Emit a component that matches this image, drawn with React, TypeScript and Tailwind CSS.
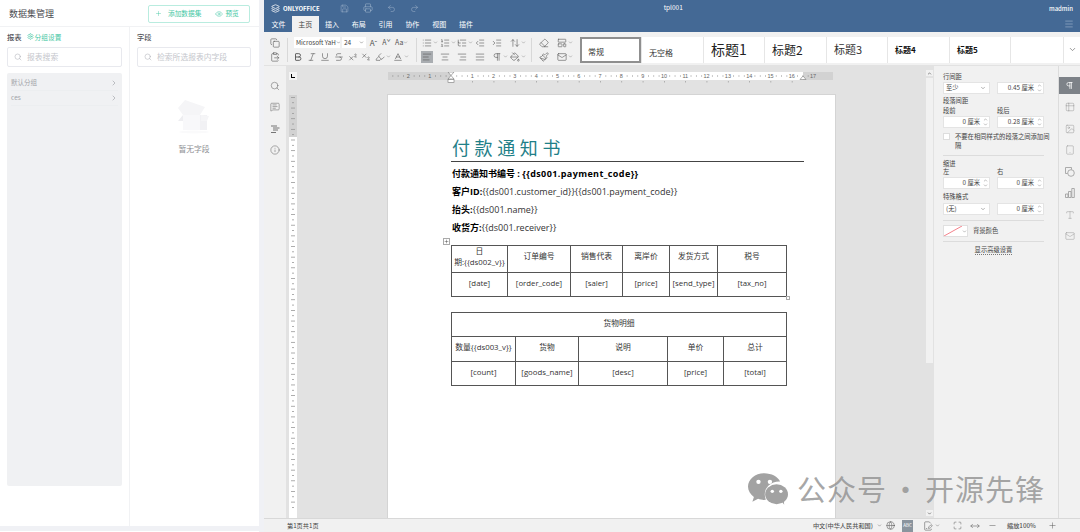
import React from "react";
import {
  Search, ChevronRight, ChevronDown, Plus, Eye, Settings, Save, Printer, Undo2, Redo2, Menu,
  Copy, ClipboardPaste, Bold, Italic, Underline, Strikethrough, Superscript, Subscript, Highlighter, Baseline,
  List, ListOrdered, ListTree, IndentDecrease, IndentIncrease, ArrowUpDown, AlignLeft, AlignCenter, AlignRight, AlignJustify,
  Pilcrow, PaintBucket, Eraser, Paintbrush, LayoutTemplate, Mail, MessageSquareText, Info, Table2, Image,
  Tablet, Type, Globe, FilePenLine, Maximize, MoveHorizontal, Minus, ChevronUp, Layers,
} from "lucide-react";

const FONT = "font-['Noto_Sans_CJK_SC','Liberation_Sans',sans-serif]";

function SearchBox({ placeholder }: { placeholder: string }) {
  return (
    <div className="flex h-[20px] items-center gap-[5px] rounded-[2px] border border-[#e8e9ee] bg-white pl-[6px] text-[7.8px] text-[#c4c6cc]">
      <Search size={8} strokeWidth={1.5} className="text-[#a9abb2]" />
      {placeholder}
    </div>
  );
}

function DataPanel() {
  return (
    <div className="flex w-[259px] shrink-0 flex-col bg-white pt-[1px]">
      <div className="flex h-[26px] items-center justify-between border-b border-[#f1f2f4] px-[9px]">
        <span className="text-[9px] text-[#4a4b50]">数据集管理</span>
        <div className="flex h-[18px] w-[102px] items-center whitespace-nowrap rounded-[2px] border border-[#b9ecdf] pl-[6px] text-[6.7px] text-[#45c7a4]">
          <Plus size={7} strokeWidth={1.5} className="mr-[6px]" />
          添加数据集
          <Eye size={8} strokeWidth={1.5} className="ml-[14px] mr-[2px]" />
          预览
        </div>
      </div>
      <div className="flex h-[499px]">
        <div className="flex w-[130px] flex-col border-r border-[#f1f2f4] px-[7px]">
          <div className="flex h-[20px] items-center gap-[5px] text-[7.3px] font-medium text-[#55565b]">
            报表
            <span className="flex items-center gap-[1px] text-[6.7px] font-normal text-[#45c7a4]">
              <Settings size={7} />
              分组设置
            </span>
          </div>
          <SearchBox placeholder="报表搜索" />
          <div className="mt-[6px] h-[413px] rounded-[2px] bg-[#f0f1f3] px-[4px] pt-[3px] text-[6.5px] text-[#a2a4a9]">
            <div className="flex h-[15px] items-center justify-between border-b border-[#eceef0]">
              默认分组
              <ChevronRight size={8} />
            </div>
            <div className="flex h-[15px] items-center justify-between border-b border-[#eceef0]">
              ces
              <ChevronRight size={8} />
            </div>
          </div>
        </div>
        <div className="flex flex-1 flex-col pl-[7px] pr-[8px]">
          <div className="flex h-[20px] items-center text-[7.3px] font-medium text-[#55565b]">字段</div>
          <SearchBox placeholder="检索所选报表内字段" />
          <div className="mt-[33px] flex flex-col items-center">
            <svg width="32" height="35" viewBox="0 0 32 35">
              <ellipse cx="16" cy="32" rx="15" ry="1.5" fill="#fafafb" />
              <path d="M5 15 L29 15 L29 30 L5 30 Z" fill="#f8f8fa" />
              <path d="M22 15 L29 15 L29 30 L22 30 Z" fill="#f1f1f4" />
              <path d="M7 0 L27 7 L22 15 L5 15 L0 8 Z" fill="#f5f5f7" />
              <path d="M0 21 L5 15 L5 21 Z" fill="#eeeef1" />
              <path d="M23 15 L31 16 L29 21 L23 21 Z" fill="#f5f5f7" />
            </svg>
            <span className="mt-[8px] text-[7.8px] text-[#8e8f94]">暂无字段</span>
          </div>
        </div>
      </div>
      <div className="h-[5px] bg-[#f0f1f5]" />
    </div>
  );
}

// one toolbar button, a fixed cell so rows line up
function Tool({
  icon: I, caret, active, sw = 1.4, cls = "w-[17.6px]",
}: { icon: React.ElementType; caret?: boolean; active?: boolean; sw?: number; cls?: string }) {
  return (
    <span className={`flex h-[12px] shrink-0 items-center ${cls}`}>
      <span className={`flex h-[12px] w-[12px] items-center justify-center ${active ? "bg-[#a9adb1]" : ""}`}>
        <I size={10} strokeWidth={sw} className="text-[#555]" />
      </span>
      {caret && <ChevronDown size={5} className="text-[#777]" />}
    </span>
  );
}

function Divider({ cls }: { cls: string }) {
  return <div className={`h-[24px] w-px shrink-0 bg-[#d8d8d8] ${cls}`} />;
}

const styles = [
  { name: "常规", cls: "text-[8px] text-[#333] w-[61px] border-2 border-[#8f8f8f] pl-[6px] pt-[5px]" },
  { name: "无空格", cls: "text-[8px] text-[#333] w-[61px] pl-[7px] pt-[6px]" },
  { name: "标题1", cls: "text-[14px] text-[#222] w-[60px] pl-[7px]" },
  { name: "标题2", cls: "text-[12px] text-[#222] w-[61px] pl-[7px]" },
  { name: "标题3", cls: "text-[11px] text-[#333] w-[60px] pl-[7px]" },
  { name: "标题4", cls: "text-[8px] font-bold text-[#111] w-[61px] pl-[7px]" },
  { name: "标题5", cls: "text-[8px] font-bold text-[#111] w-[60px] pl-[7px]" },
  { name: "", cls: "w-[52px]" },
];

function Toolbar() {
  return (
    <div className="flex h-[34px] items-center border-b border-[#e2e2e2] bg-[#f1f1f1] pl-[5px] pt-[2px]">
      <div className="flex w-[12px] flex-col gap-[2px]">
        <Tool icon={Copy} cls="w-[12px]" />
        <Tool icon={ClipboardPaste} cls="w-[12px]" />
      </div>
      <Divider cls="ml-[6px] mr-[4px]" />
      <div className="flex w-[118px] shrink-0 flex-col gap-[2px]">
        <div className="flex h-[12px] items-center pl-[2px]">
          <span className="flex h-[11px] w-[46px] items-center justify-between overflow-hidden whitespace-nowrap bg-white pl-[2px] text-[6.3px] text-[#444]">
            Microsoft YaH
            <ChevronDown size={5} className="shrink-0" />
          </span>
          <span className="ml-[2px] flex h-[11px] w-[24px] items-center justify-between bg-white px-[2px] text-[6.5px] text-[#444]">
            24
            <ChevronDown size={5} />
          </span>
          <span className="ml-[1px] w-[13px] text-center text-[8px] leading-[11px] text-[#555]">Aˆ</span>
          <span className="w-[13px] text-center text-[7px] leading-[11px] text-[#555]">Aˇ</span>
          <span className="ml-[2px] text-[7px] leading-[11px] text-[#555]">Aa</span>
          <ChevronDown size={5} className="text-[#777]" />
        </div>
        <div className="flex items-center">
          <Tool icon={Bold} sw={2.2} cls="w-[13.7px]" />
          <Tool icon={Italic} cls="w-[13.7px]" />
          <Tool icon={Underline} cls="w-[13.7px]" />
          <Tool icon={Strikethrough} cls="w-[13.7px]" />
          <Tool icon={Superscript} cls="w-[13.7px]" />
          <Tool icon={Subscript} cls="w-[13.7px]" />
          <Tool icon={Highlighter} caret cls="w-[18px]" />
          <Tool icon={Baseline} caret cls="w-[18px]" />
        </div>
      </div>
      <Divider cls="ml-[6px] mr-[4px]" />
      <div className="flex w-[106px] shrink-0 flex-col gap-[2px]">
        <div className="flex items-center">
          <Tool icon={List} caret />
          <Tool icon={ListOrdered} caret />
          <Tool icon={ListTree} caret />
          <Tool icon={IndentDecrease} />
          <Tool icon={IndentIncrease} />
          <Tool icon={ArrowUpDown} caret />
        </div>
        <div className="flex items-center">
          <Tool icon={AlignLeft} active />
          <Tool icon={AlignCenter} />
          <Tool icon={AlignRight} />
          <Tool icon={AlignJustify} />
          <Tool icon={Pilcrow} caret />
          <Tool icon={PaintBucket} caret />
        </div>
      </div>
      <Divider cls="ml-[4px] mr-[6px]" />
      <div className="flex w-[36px] shrink-0 flex-col gap-[2px]">
        <div className="flex items-center">
          <Tool icon={Eraser} />
          <Tool icon={LayoutTemplate} caret />
        </div>
        <div className="flex items-center">
          <Tool icon={Paintbrush} />
          <Tool icon={Mail} caret />
        </div>
      </div>
      <div className="ml-[6px] flex h-[26px] items-stretch gap-px bg-[#e6e6e6]">
        {styles.map((s) => (
          <div key={s.name || "blank"} className={`flex shrink-0 items-center bg-white ${s.cls}`}>
            {s.name}
          </div>
        ))}
        <div className="flex w-[16px] items-center justify-center bg-white">
          <ChevronDown size={9} className="text-[#777]" />
        </div>
      </div>
    </div>
  );
}

function HRuler() {
  // 21.3px per cm, zero sits on the left page margin
  const nums = [-2, -1, 1, 2, 3, 4, 5, 6, 7, 8, 9, 10, 11, 12, 13, 14, 15, 16, 17];
  const x0 = 63;
  const ticks: number[] = [];
  for (let i = -11; i <= 67; i++) ticks.push(i);
  return (
    <svg width="445" height="14" viewBox="0 0 445 14" className="block">
      <rect width="445" height="8" fill="#d2d2d2" />
      <rect x={x0} width="352" height="8" fill="#fff" />
      {ticks.map((t) => (
        t % 4 !== 0 && <rect key={t} x={x0 + t * 5.325} y="3.5" width="0.8" height="1" fill="#777" />
      ))}
      {nums.map((n) => (
        <text key={n} x={x0 + n * 21.3} y="6" fontSize="5.5" textAnchor="middle" fill="#666" fontFamily="Liberation Sans">
          {Math.abs(n)}
        </text>
      ))}
      {nums.filter((n) => n > 0 && n < 17).map((n) => (
        <rect key={n} x={x0 + n * 21.3} y="9" width="0.7" height="1.500" fill="#999" />
      ))}
      <path d={`M${x0 - 3} 0 h6 l-3 3.500 z M${x0} 3.500 l3 3.500 h-6 z`} fill="#fff" stroke="#777" strokeWidth="0.6" />
      <rect x={x0 - 3} y="7.500" width="6" height="3" fill="#fff" stroke="#777" strokeWidth="0.6" />
      <path d={`M${x0 + 352} 4 l3 3.500 h-6 z`} fill="#fff" stroke="#777" strokeWidth="0.6" />
    </svg>
  );
}

function VRuler() {
  const rows = Array.from({ length: 78 }, (_, i) => i);
  return (
    <svg width="8" height="423" viewBox="0 0 8 423" className="block">
      <rect width="8" height="423" fill="#fff" />
      <rect width="8" height="42" fill="#d2d2d2" />
      {rows.map((i) => (
        <rect key={i} x={i % 2 ? 3 : 2} y={i * 5.325 + 2} width={i % 2 ? 2 : 4} height="0.8" fill="#999" />
      ))}
    </svg>
  );
}

const cell = "border border-[#555] align-top pt-[5px] text-center font-normal px-0";

function Doc() {
  return (
    <div className="relative h-[423px] w-[447px] shrink-0 overflow-hidden bg-white pl-[63px] pr-[31px] pt-[40px] font-['Open_Sans','Noto_Sans_CJK_SC',sans-serif] text-[#333] shadow-[0_0_0_1px_#d4d4d4]">
      <div className="border-b border-[#444] pb-[1px] pl-[1px] font-['Noto_Sans_CJK_SC',sans-serif] text-[18px] leading-[25px] tracking-[4.6px] text-[#1f8088]">
        付款通知书
      </div>
      <div className="mt-[3px] pl-[1px] text-[9px] leading-[18px]">
        <p className="font-bold text-black">付款通知书编号 : <span className="tracking-[0.4px]">{"{{ds001.payment_code}}"}</span></p>
        <p><b className="text-black">客户ID:</b>{"{{ds001.customer_id}}{{ds001.payment_code}}"}</p>
        <p><b className="text-black">抬头:</b>{"{{ds001.name}}"}</p>
        <p><b className="text-black">收货方:</b>{"{{ds001.receiver}}"}</p>
      </div>
      <div className="relative mt-[8px] w-[335px]">
        <div className="absolute -left-[8px] -top-[7px] flex h-[7px] w-[7px] items-center justify-center border border-[#aaa] bg-white">
          <Plus size={5} />
        </div>
        <table className="w-[335px] table-fixed border-collapse text-[7.8px] leading-[11px]">
          <colgroup>
            <col className="w-[56px]" /><col className="w-[63px]" /><col className="w-[52px]" />
            <col className="w-[47px]" /><col className="w-[48px]" /><col className="w-[69px]" />
          </colgroup>
          <tbody>
            <tr className="h-[27px]">
              <th className={`${cell} !pt-0`}>日<br />期:{"{{ds002_v}}"}</th>
              {["订单编号", "销售代表", "离岸价", "发货方式", "税号"].map((t) => (
                <th key={t} className={cell}>{t}</th>
              ))}
            </tr>
            <tr className="h-[24px]">
              {["[date]", "[order_code]", "[saler]", "[price]", "[send_type]", "[tax_no]"].map((t) => (
                <td key={t} className={cell}>{t}</td>
              ))}
            </tr>
          </tbody>
        </table>
        <div className="absolute -bottom-[3px] -right-[4px] h-[4px] w-[4px] border border-[#aaa] bg-white" />
      </div>
      <table className="mt-[15px] w-[335px] table-fixed border-collapse text-[7.8px] leading-[11px]">
        <colgroup>
          <col className="w-[64px]" /><col className="w-[63px]" /><col className="w-[89px]" />
          <col className="w-[56px]" /><col className="w-[63px]" />
        </colgroup>
        <tbody>
          <tr className="h-[24px]"><th colSpan={5} className={cell}>货物明细</th></tr>
          <tr className="h-[25px]">
            {["数量{{ds003_v}}", "货物", "说明", "单价", "总计"].map((t) => (
              <th key={t} className={cell}>{t}</th>
            ))}
          </tr>
          <tr className="h-[24px]">
            {["[count]", "[goods_name]", "[desc]", "[price]", "[total]"].map((t) => (
              <td key={t} className={cell}>{t}</td>
            ))}
          </tr>
        </tbody>
      </table>
    </div>
  );
}

function Spin({ value }: { value: string }) {
  return (
    <div className="flex h-[12px] w-[47px] items-center justify-end gap-[3px] border border-[#e4e4e4] bg-white pr-[1px] text-[6.3px] text-[#444]">
      {value}
      <span className="flex flex-col text-[#666]">
        <ChevronUp size={5} />
        <ChevronDown size={5} />
      </span>
    </div>
  );
}

function Pick({ value }: { value: string }) {
  return (
    <div className="flex h-[12px] w-[47px] items-center justify-between border border-[#e4e4e4] bg-white pl-[2px] pr-[3px] text-[6.3px] text-[#444]">
      {value}
      <ChevronDown size={6} className="text-[#666]" />
    </div>
  );
}

function ParaPanel() {
  return (
    <div className="flex w-[124px] shrink-0 flex-col bg-[#f1f1f1] pl-[9px] pr-[14px] pt-[7px] text-[6.3px] leading-[8px] text-[#444]">
      <div className="h-[8px]">行间距</div>
      <div className="mt-[1px] flex justify-between"><Pick value="至少" /><Spin value="0.45 厘米" /></div>
      <div className="mt-[3px] h-[9px]">段落间距</div>
      <div className="mt-[1px] flex h-[9px] justify-between"><span>段前</span><span className="w-[47px]">段后</span></div>
      <div className="flex justify-between"><Spin value="0 厘米" /><Spin value="0.28 厘米" /></div>
      <div className="mt-[4px] -mr-[6px] flex gap-[5px]">
        <span className="mt-[1px] h-[7px] w-[7px] shrink-0 border border-[#ddd] bg-white" />
        <span className="leading-[9px]">不要在相同样式的段落之间添加间隔</span>
      </div>
      <div className="mt-[5px] h-px bg-[#dcdcdc]" />
      <div className="mt-[4px] h-[8px]">缩进</div>
      <div className="flex h-[9px] justify-between"><span>左</span><span className="w-[47px]">右</span></div>
      <div className="flex justify-between"><Spin value="0 厘米" /><Spin value="0 厘米" /></div>
      <div className="mt-[4px] h-[8px]">特殊格式</div>
      <div className="mt-[2px] flex justify-between"><Pick value="(无)" /><Spin value="0 厘米" /></div>
      <div className="mt-[5px] h-px bg-[#dcdcdc]" />
      <div className="mt-[4px] flex items-center gap-[5px]">
        <div className="flex h-[12px] w-[25px] border border-[#e0e0e0] bg-white">
          <svg width="18" height="10" viewBox="0 0 18 10"><path d="M0 10 L18 0" stroke="#f0616d" strokeWidth="0.8" /></svg>
          <ChevronDown size={5} className="mt-[3px] text-[#666]" />
        </div>
        背景颜色
      </div>
      <div className="mt-[4px] h-px bg-[#dcdcdc]" />
      <div className="mt-[4px] flex justify-center">
        <span className="border-b border-dotted border-[#777]">显示高级设置</span>
      </div>
    </div>
  );
}

function Watermark() {
  return (
    <div className="absolute bottom-[26px] right-[35px] flex items-center font-['Noto_Sans_CJK_SC',sans-serif] text-[29px] leading-[36px] tracking-[1px] text-[#8f8f8f]/80">
      <svg width="40" height="33" viewBox="0 0 42 34" className="mr-[9px]">
        <path d="M17 1 C7.6 1 0 7.3 0 15 c0 4.4 2.4 8.2 6.2 10.8 L4.6 31 l6-3.3 C12.500 28.400 14.800 29 17 29 c.6 0 1.200 0 1.800-.1 C18 27 17.600 25.200 17.600 23.300 17.600 15.400 24.900 9.200 33.800 9.800 31.300 4.700 24.800 1 17 1 Z" fill="#a2a2a2" />
        <circle cx="11" cy="10" r="2.300" fill="#fff" />
        <circle cx="23" cy="10" r="2.300" fill="#fff" />
        <ellipse cx="30" cy="23" rx="12" ry="10.500" fill="#a2a2a2" />
        <path d="M35 30 l3 4 -.6-6 Z" fill="#a2a2a2" />
        <circle cx="25.500" cy="20" r="1.800" fill="#fff" />
        <circle cx="34.500" cy="20" r="1.800" fill="#fff" />
      </svg>
      <span>公众号</span>
      <span className="mx-[4px]">·</span>
      <span>开源先锋</span>
    </div>
  );
}

function Editor() {
  const tabs = ["文件", "主页", "插入", "布局", "引用", "协作", "视图", "插件"];
  return (
    <div className="relative flex min-w-0 flex-1 flex-col">
      <div className="h-[32px] bg-[#446995] text-white">
        <div className="flex h-[16px] items-center pl-[7px]">
          <Layers size={9} />
          <span className="ml-[3px] text-[6px] font-bold">ONLYOFFICE</span>
          <span className="ml-[20px] flex items-center gap-[14px] text-[#a9bcd2]">
            <Save size={9} strokeWidth={1.2} />
            <Printer size={10} strokeWidth={1.2} />
            <Undo2 size={9} strokeWidth={1.2} />
            <Redo2 size={9} strokeWidth={1.2} />
          </span>
          <span className="ml-[245px] text-[6.5px]">tpl001</span>
          <span className="ml-auto pr-[7px] text-[6px] font-medium">madmin</span>
        </div>
        <div className="flex h-[16px] items-end pl-[1px] text-[7px]">
          {tabs.map((t) => (
            <span key={t} className={`flex h-[16px] w-[26.800px] items-center justify-center ${t === "主页" ? "bg-[#f1f1f1] text-[#444]" : ""}`}>
              {t}
            </span>
          ))}
          <Menu size={10} strokeWidth={1.2} className="mb-[3px] ml-auto mr-[6px] text-[#b6c6da]" />
        </div>
      </div>
      <Toolbar />
      <div className="flex min-h-0 flex-1">
        <div className="flex w-[22px] shrink-0 flex-col items-center gap-[11.300px] bg-[#f1f1f1] pt-[15px] text-[#666]">
          <Search size={10} strokeWidth={1.3} />
          <MessageSquareText size={10} strokeWidth={1.3} />
          <svg width="10" height="10" viewBox="0 0 10 10" stroke="currentColor" strokeWidth="0.9">
            <path d="M1 2 H7 M3 4 H9.500 M3 6 H8 M1 8.500 H6" />
          </svg>
          <Info size={10} strokeWidth={1.3} />
        </div>
        <div className="relative min-w-0 flex-1 overflow-hidden bg-[#e2e2e2]">
          <div className="flex h-[29px] pl-[3px] pt-[6px]">
            <div className="flex h-[8px] w-[8px] items-center justify-center bg-[#f4f4f4]">
              <span className="h-[4px] w-[4px] border-b border-l border-black" />
            </div>
            <div className="ml-[91px]"><HRuler /></div>
          </div>
          <div className="flex">
            <div className="ml-[3px] w-[8px] shrink-0"><VRuler /></div>
            <div className="ml-[91px]"><Doc /></div>
          </div>
        </div>
        <div className="flex w-[9px] shrink-0 flex-col items-center bg-[#e2e2e2] pt-[4px]">
          <div className="flex h-[6px] w-[7px] items-center justify-center bg-[#f1f1f1]"><ChevronUp size={5} /></div>
          <div className="mt-[2px] h-[285px] w-[7px] bg-[#f1f1f1]" />
          <div className="mb-[2px] mt-auto flex h-[6px] w-[7px] items-center justify-center bg-[#f1f1f1]"><ChevronDown size={5} /></div>
        </div>
        <ParaPanel />
        <div className="flex w-[22px] shrink-0 flex-col items-center border-l border-[#dcdcdc] bg-[#f1f1f1] pt-[11px] text-[#999]">
          <div className="flex h-[17px] w-full items-center justify-center bg-[#7d8288] text-white"><Pilcrow size={9} /></div>
          <div className="mt-[8px] flex flex-col items-center gap-[11.500px]">
            <Table2 size={10} strokeWidth={1.2} />
            <Image size={10} strokeWidth={1.2} />
            <Tablet size={10} strokeWidth={1.2} />
            <svg width="10" height="10" viewBox="0 0 10 10" fill="none" stroke="currentColor" strokeWidth="0.8">
              <path d="M6.500 2.500 V0.500 H0.500 V6.500 H2.500" />
              <circle cx="6" cy="6" r="3.300" />
            </svg>
            <svg width="10" height="10" viewBox="0 0 10 10" fill="none" stroke="currentColor" strokeWidth="0.8">
              <path d="M0.500 6 H3 V9.500 H0.500 Z M3.500 3.500 H6 V9.500 H3.500 Z M6.800 0.500 H9.300 V9.500 H6.800 Z" />
            </svg>
            <Type size={10} strokeWidth={1.2} />
            <Mail size={10} strokeWidth={1.2} />
          </div>
        </div>
      </div>
      <div className="flex h-[14px] shrink-0 items-center whitespace-nowrap border-t border-[#d8d8d8] bg-[#f1f1f1] pl-[23px] text-[6.200px] text-[#444]">
        第1页共1页
        <span className="ml-auto flex items-center text-[#555]">
          <span className="font-medium">中文(中华人民共和国)</span>
          <ChevronDown size={5} className="ml-[3.500px]" />
          <Globe size={9} strokeWidth={1.4} className="ml-[4px]" />
          <span className="ml-[7.500px] flex h-[12px] w-[11px] items-center justify-center bg-[#8a949e] text-[4.500px] text-white">ABC</span>
          <FilePenLine size={10} strokeWidth={1.3} className="ml-[10px]" />
          <ChevronDown size={5} className="ml-[2px]" />
          <Maximize size={9} strokeWidth={1.3} className="ml-[12.500px]" />
          <MoveHorizontal size={10} strokeWidth={1.3} className="ml-[8.500px]" />
          <Minus size={9} strokeWidth={1.3} className="ml-[7.500px]" />
          <span className="ml-[10.500px] w-[29px] font-medium">缩放100%</span>
          <Plus size={9} strokeWidth={1.3} className="ml-[11.500px] mr-[23.500px]" />
        </span>
      </div>
      <Watermark />
    </div>
  );
}

export default function App() {
  return (
    <div className={`flex h-[532px] w-[1080px] overflow-hidden bg-[#f0f1f5] ${FONT}`}>
      <DataPanel />
      <div className="w-[5px] shrink-0" />
      <Editor />
    </div>
  );
}
